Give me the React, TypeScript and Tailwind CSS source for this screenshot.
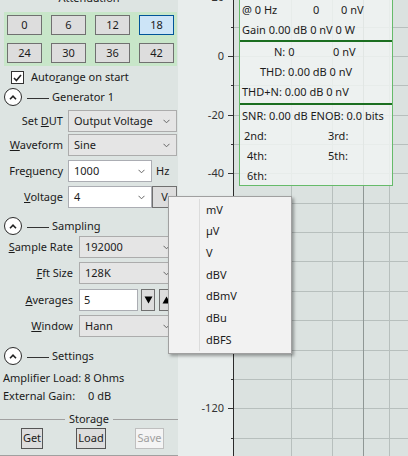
import React from 'react';

const gridTops = Array.from({ length: 16 }, (_, k) => -2.7 + 29.35 * k);
// -60, -80 and -100 sit under the open unit menu, so only the visible ones are drawn
const axisLabels: [string, number][] = [
  ['20', 0],
  ['0', 2],
  ['-20', 4],
  ['-40', 6],
  ['-120', 14],
];
const units = ['mV', 'µV', 'V', 'dBV', 'dBmV', 'dBu', 'dBFS'];

function Chevron() {
  return (
    <svg width="7" height="5" viewBox="0 0 7 5" className="shrink-0">
      <path d="M0.5 0.8 L3.5 3.8 L6.5 0.8" fill="none" stroke="#666" strokeWidth="1" />
    </svg>
  );
}

function Select({ value, className = '', white = false }: { value: string; className?: string; white?: boolean }) {
  return (
    <div
      className={`h-[22px] flex items-center justify-between pl-[5px] pr-[6px] border ${
        white ? 'bg-white border-[#abadb3]' : 'bg-[#e5e5e5] border-[#acacac]'
      } ${className}`}
    >
      <span>{value}</span>
      <Chevron />
    </div>
  );
}

function SectionHeader({ title, className = '' }: { title: string; className?: string }) {
  return (
    <div className={`flex items-center h-[18px] pl-[4px] ${className}`}>
      <div className="w-[18px] h-[18px] rounded-full border-[1.5px] border-[#2a2a2a] bg-white flex items-center justify-center">
        <svg width="8" height="5" viewBox="0 0 8 5">
          <path d="M1 4.2 L4 1.2 L7 4.2" fill="none" stroke="#222" strokeWidth="1.6" />
        </svg>
      </div>
      <div className="ml-[5px] w-[22px] h-px bg-[#333] mt-[2px]" />
      <span className="ml-[3px]">{title}</span>
    </div>
  );
}

export default function App() {
  return (
    <div className="relative w-[408px] h-[456px] overflow-hidden flex font-['Noto_Sans',sans-serif] text-[11px] text-[#1b1b1b]">
      {/* left control panel */}
      <div className="w-[178px] shrink-0 bg-[#dde4e2] flex flex-col">
        <div className="h-[12px]">
          <div className="-mt-[10px] leading-[15px] text-center">Attenuation</div>
        </div>

        <div className="ml-[4px] w-[173px] h-[54px] bg-[#c8e6c9] pt-[3px] pl-[3px] grid grid-cols-[repeat(4,35px)] gap-x-[9px] gap-y-[8px] content-start">
          {['0', '6', '12', '18', '24', '30', '36', '42'].map((v) => (
            <div
              key={v}
              className={`h-[20px] flex items-center justify-center border ${
                v === '18' ? 'bg-[#cce4f7] border-[#005499]' : 'bg-[#dddddd] border-[#707070]'
              }`}
            >
              {v}
            </div>
          ))}
        </div>

        <div className="mt-[5px] h-[13px] pl-[11px] flex items-center gap-[7px]">
          <div className="w-[13px] h-[13px] border border-[#333] bg-white flex items-center justify-center">
            <svg width="9" height="8" viewBox="0 0 9 8">
              <path d="M1 4 L3.4 6.5 L8 1" fill="none" stroke="#222" strokeWidth="1.6" />
            </svg>
          </div>
          <span>
            Auto<u>r</u>ange on start
          </span>
        </div>

        <SectionHeader title="Generator 1" className="mt-[4px]" />

        <div className="flex items-center mt-[4px]">
          <div className="w-[68px] pr-[5px] text-right">
            Set <u>D</u>UT
          </div>
          <Select value="Output Voltage" className="w-[109px]" />
        </div>
        <div className="flex items-center mt-[2px]">
          <div className="w-[68px] pr-[5px] text-right">
            <u>W</u>aveform
          </div>
          <Select value="Sine" className="w-[109px]" />
        </div>
        <div className="flex items-center mt-[4px]">
          <div className="w-[68px] pr-[5px] text-right">
            Fre<u>q</u>uency
          </div>
          <Select value="1000" white className="w-[84px]" />
          <span className="ml-[4px]">Hz</span>
        </div>
        <div className="flex items-center mt-[4px]">
          <div className="w-[68px] pr-[5px] text-right">
            <u>V</u>oltage
          </div>
          <Select value="4" white className="w-[84px]" />
          <div className="w-[25px] h-[22px] bg-[#dddddd] border border-[#707070] flex items-center justify-center">V</div>
        </div>

        <SectionHeader title="Sampling" className="mt-[9px]" />

        <div className="flex items-center mt-[1px]">
          <div className="w-[79px] pr-[6px] text-right">
            <u>S</u>ample Rate
          </div>
          <Select value="192000" className="w-[98px]" />
        </div>
        <div className="flex items-center mt-[4px]">
          <div className="w-[79px] pr-[6px] text-right">
            <u>F</u>ft Size
          </div>
          <Select value="128K" className="w-[98px]" />
        </div>
        <div className="flex items-center mt-[5px]">
          <div className="w-[79px] pr-[6px] text-right">
            <u>A</u>verages
          </div>
          <div className="w-[59px] h-[22px] bg-white border border-[#abadb3] pl-[4px] flex items-center">5</div>
          <div className="ml-[3px] w-[14px] h-[22px] bg-[#dddddd] border border-[#707070] flex items-center justify-center">
            <svg width="9" height="8" viewBox="0 0 9 8">
              <path d="M0.5 0.5 H8.5 L4.5 7.5 Z" fill="#000" />
            </svg>
          </div>
          <div className="ml-[4px] w-[14px] h-[22px] bg-[#dddddd] border border-[#707070] flex items-center justify-center">
            <svg width="9" height="8" viewBox="0 0 9 8">
              <path d="M0.5 7.5 H8.5 L4.5 0.5 Z" fill="#000" />
            </svg>
          </div>
        </div>
        <div className="flex items-center mt-[4px]">
          <div className="w-[79px] pr-[6px] text-right">
            <u>W</u>indow
          </div>
          <Select value="Hann" className="w-[98px]" />
        </div>

        <SectionHeader title="Settings" className="mt-[10px]" />

        <div className="mt-[4px] h-[18px] pl-[3px] flex items-center">Amplifier Load: 8 Ohms</div>
        <div className="h-[18px] pl-[3px] flex items-center">
          <span className="w-[85px]">External Gain:</span>
          <span>0 dB</span>
        </div>

        <div className="mt-[7px] h-[14px] flex items-center">
          <div className="flex-1 h-px bg-[#a0a0a0]" />
          <span className="px-[4px]">Storage</span>
          <div className="flex-1 h-px bg-[#a0a0a0]" />
        </div>

        <div className="mt-[2px] h-[21px] flex pl-[21px]">
          <div className="w-[22px] bg-[#dddddd] border border-[#555] flex items-center justify-center">Get</div>
          <div className="ml-[33px] w-[30px] bg-[#dddddd] border border-[#555] flex items-center justify-center">Load</div>
          <div className="ml-[29px] w-[29px] bg-[#f4f4f4] border border-[#bfbfbf] text-[#a0a0a0] flex items-center justify-center">
            Save
          </div>
        </div>
        <div className="mt-[6px] h-px bg-[#a0a0a0]" />
      </div>

      {/* chart */}
      <div className="relative flex-1 bg-[#e8edec]">
        {axisLabels.map(([l, i]) => (
          <div
            key={l}
            className="absolute left-0 w-[46px] text-right leading-[16px] text-[#333]"
            style={{ top: gridTops[i] - 8 }}
          >
            {l}
          </div>
        ))}
        {gridTops.map((t, i) => (
          <div
            key={t}
            className={`absolute h-px bg-[#333] ${i % 2 === 0 ? 'left-[50px] w-[5px]' : 'left-[53px] w-[2px]'}`}
            style={{ top: Math.round(t) }}
          />
        ))}

        <div className="absolute left-[55px] top-0 bottom-0 right-0 bg-[#dbe2e0] border-l border-[#2b2b2b]">
          {gridTops.map((t) => (
            <div key={t} className="absolute left-0 right-0 h-px bg-[#b7bfbd]" style={{ top: Math.round(t) }} />
          ))}
          <div className="absolute top-0 bottom-0 left-[57px] w-px bg-[#b7bfbd]" />
          <div className="absolute top-0 bottom-0 left-[98px] w-px bg-[#b7bfbd]" />
          <div className="absolute top-0 bottom-0 left-[129px] w-px bg-[#8f9795]" />
          <div className="absolute top-0 bottom-0 left-[155px] w-px bg-[#b7bfbd]" />
        </div>

        {/* readout box */}
        <div className="absolute left-[61px] -top-[1px] w-[154px] h-[187px] border border-[#66bb6a] bg-[#f0f3f2]/85 leading-[20px]">
          <div className="flex pl-[2px]">
            <span className="w-[71px]">@ 0 Hz</span>
            <span className="w-[28px]">0</span>
            <span>0 nV</span>
          </div>
          <div className="pl-[2px]">Gain 0.00 dB 0 nV 0 W</div>
          <div className="h-[2px] bg-[#1b6e20]" />
          <div className="flex pl-[34px]">
            <span className="w-[59px]">N: 0</span>
            <span>0 nV</span>
          </div>
          <div className="pl-[20px]">THD: 0.00 dB 0 nV</div>
          <div className="pl-[2px]">THD+N: 0.00 dB 0 nV</div>
          <div className="mt-[1px] h-[2px] bg-[#1b6e20]" />
          <div className="pt-[1px] pl-[2px] whitespace-nowrap">SNR: 0.00 dB ENOB: 0.0 bits</div>
          <div className="flex pl-[4px]">
            <span className="w-[84px]">2nd:</span>
            <span>3rd:</span>
          </div>
          <div className="flex pl-[7px]">
            <span className="w-[81px]">4th:</span>
            <span>5th:</span>
          </div>
          <div className="pl-[7px]">6th:</div>
        </div>
      </div>

      {/* unit dropdown */}
      <div className="absolute left-[168px] top-[196px] w-[124px] h-[158px] bg-[#f2f2f2] border border-[#a0a0a0] shadow-[2px_2px_3px_rgba(0,0,0,0.35)] py-[2px] flex">
        <div className="w-[31px] border-r border-[#dcdcdc]" />
        <div className="flex flex-col">
          {units.map((u) => (
            <div key={u} className="h-[22px] pl-[6px] flex items-center">
              {u}
            </div>
          ))}
        </div>
      </div>
    </div>
  );
}
